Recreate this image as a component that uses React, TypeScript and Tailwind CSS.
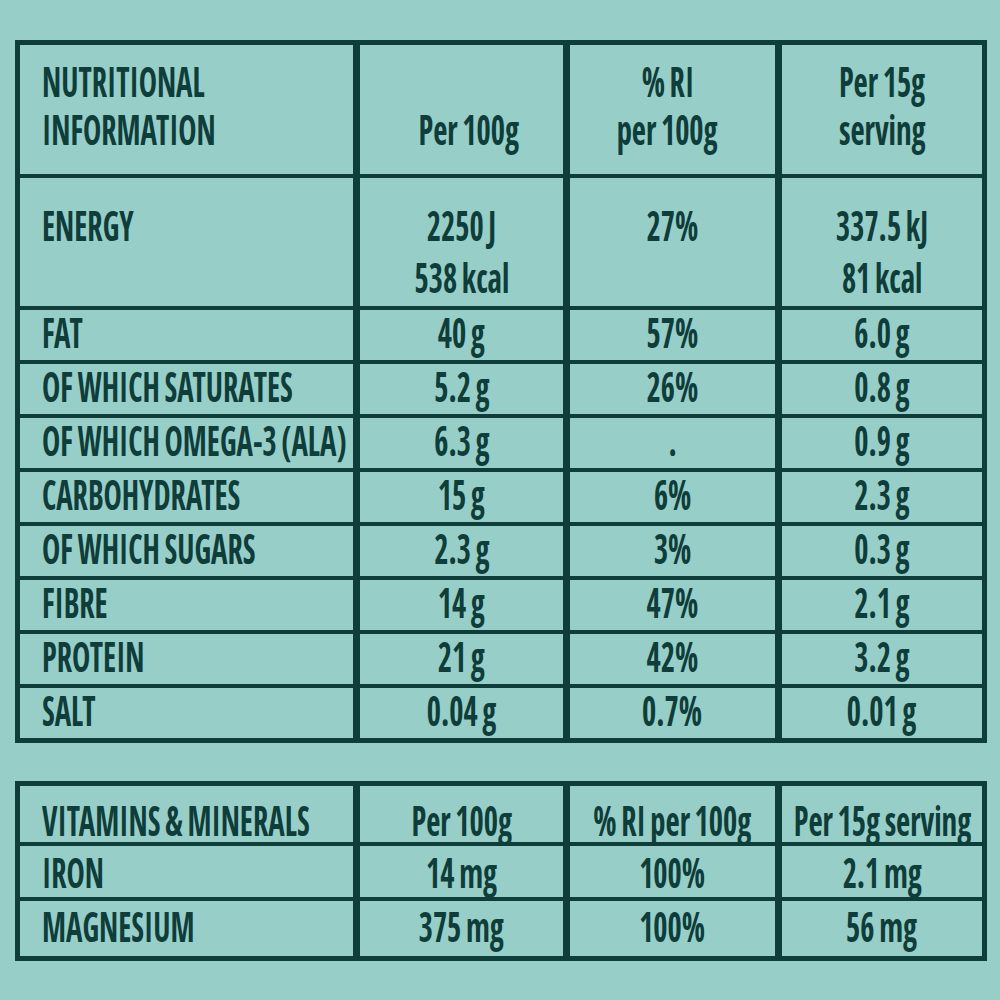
const cell = 'bg-[#97cfc8]';

type Row = [string, string, string, string];

const nutrients: Row[] = [
  ['FAT', '40 g', '57%', '6.0 g'],
  ['OF WHICH SATURATES', '5.2 g', '26%', '0.8 g'],
  ['OF WHICH OMEGA-3 (ALA)', '6.3 g', '.', '0.9 g'],
  ['CARBOHYDRATES', '15 g', '6%', '2.3 g'],
  ['OF WHICH SUGARS', '2.3 g', '3%', '0.3 g'],
  ['FIBRE', '14 g', '47%', '2.1 g'],
  ['PROTEIN', '21 g', '42%', '3.2 g'],
  ['SALT', '0.04 g', '0.7%', '0.01 g'],
];

const minerals: Row[] = [
  ['IRON', '14 mg', '100%', '2.1 mg'],
  ['MAGNESIUM', '375 mg', '100%', '56 mg'],
];

// the label face is very narrow, so squeeze the glyphs horizontally
const Txt = ({ children, left }: { children: React.ReactNode; left?: boolean }) => (
  <span
    className={
      left
        ? 'inline-block shrink-0 whitespace-nowrap [word-spacing:-4px] scale-x-[0.73] origin-left'
        : 'inline-block shrink-0 whitespace-nowrap [word-spacing:-4px] scale-x-[0.73] origin-center'
    }
  >
    {children}
  </span>
);

const DataRow = ({ row, pad }: { row: Row; pad: string }) => (
  <>
    <div className={`${cell} ${pad} pl-[22px] leading-[44px]`}>
      <Txt left>{row[0]}</Txt>
    </div>
    {row.slice(1).map((v, i) => (
      <div key={i} className={`${cell} ${pad} flex items-start justify-center leading-[44px]`}>
        <Txt>{v}</Txt>
      </div>
    ))}
  </>
);

export default function App() {
  return (
    <div
      className="min-h-screen bg-[#97cfc8] px-[15px] pt-[40px] text-[#0e3d3a] text-[42px] font-bold [font-stretch:75%]"
      style={{ fontFamily: '"Open Sans Condensed", "Open Sans", sans-serif' }}
    >
      <div className="grid w-[972px] grid-cols-[333px_203px_205px_200px] grid-rows-[129px_128px_repeat(8,50px)] gap-x-[7px] gap-y-[4px] border-[5px] border-[#0e3d3a] bg-[#0e3d3a]">
        <div className={`${cell} flex flex-col pl-[22px] pt-[12px] leading-[48px]`}>
          <Txt left>NUTRITIONAL</Txt>
          <Txt left>INFORMATION</Txt>
        </div>
        <div className={`${cell} flex justify-center pt-[60px] pl-[14px] leading-[48px]`}>
          <Txt>Per 100g</Txt>
        </div>
        <div className={`${cell} flex flex-col items-center pt-[12px] pr-[10px] leading-[48px]`}>
          <Txt>% RI</Txt>
          <Txt>per 100g</Txt>
        </div>
        <div className={`${cell} flex flex-col items-center pt-[12px] leading-[48px]`}>
          <Txt>Per 15g</Txt>
          <Txt>serving</Txt>
        </div>

        <div className={`${cell} pl-[22px] pt-[21px] leading-[52px]`}>
          <Txt left>ENERGY</Txt>
        </div>
        <div className={`${cell} flex flex-col items-center pt-[21px] leading-[52px]`}>
          <Txt>2250 J</Txt>
          <Txt>538 kcal</Txt>
        </div>
        <div className={`${cell} flex justify-center pt-[21px] leading-[52px]`}>
          <Txt>27%</Txt>
        </div>
        <div className={`${cell} flex flex-col items-center pt-[21px] leading-[52px]`}>
          <Txt>337.5 kJ</Txt>
          <Txt>81 kcal</Txt>
        </div>

        {nutrients.map((r) => (
          <DataRow key={r[0]} row={r} pad="pt-0" />
        ))}
      </div>

      <div className="mt-[38px] grid w-[972px] grid-cols-[333px_203px_205px_200px] grid-rows-[56px_51px_55px] gap-x-[7px] gap-y-[4px] border-[5px] border-[#0e3d3a] bg-[#0e3d3a]">
        <DataRow row={['VITAMINS & MINERALS', 'Per 100g', '% RI per 100g', 'Per 15g serving']} pad="pt-[12px]" />
        <DataRow row={minerals[0]} pad="pt-[4px]" />
        <DataRow row={minerals[1]} pad="pt-[3px]" />
      </div>
    </div>
  );
}
